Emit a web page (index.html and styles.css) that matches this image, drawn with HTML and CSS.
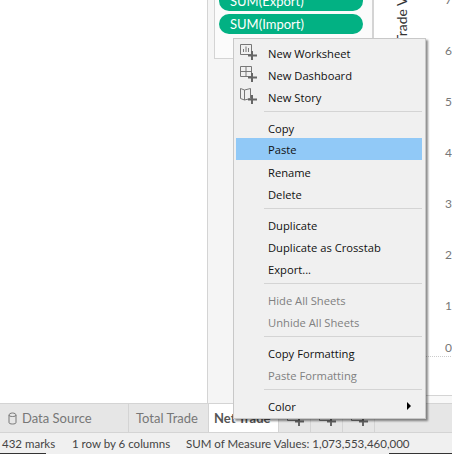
FILE: index.html
```html
<!DOCTYPE html>
<html lang="en">
<head>
    <meta charset="UTF-8">
    <meta name="viewport" content="width=device-width, initial-scale=1.0">
    <title>Net Trade</title>
    <link rel="stylesheet" href="styles.css">
</head>
<body>
    <div class="workspace">
        <div class="side-pane"></div>
        <div class="shelf-pane">
            <div class="marks-card">
                <div class="pill">SUM(Export)</div>
                <div class="pill">SUM(Import)</div>
            </div>
        </div>
        <div class="plot">
            <div class="plot-main">
                <div class="axis-title"><span>Trade Value</span></div>
                <div class="axis">
                    <div class="tick">7</div>
                    <div class="tick">6</div>
                    <div class="tick">5</div>
                    <div class="tick">4</div>
                    <div class="tick">3</div>
                    <div class="tick">2</div>
                    <div class="tick tick-short">1</div>
                    <div class="tick">0</div>
                    <div class="axis-baseline"></div>
                </div>
            </div>
            <div class="plot-scroll"></div>
        </div>
    </div>

    <div class="tab-strip">
        <div class="tab tab-source">
            <svg class="db-icon" width="9" height="13" viewBox="0 0 9 13"><path d="M1 3v7.5c0 1 1.5 1.5 3.5 1.5s3.500-.5 3.500-1.500V3M1 3c0-1 1.500-2 3.500-2S8 2 8 3 6.500 4.500 4.500 4.500 1 4 1 3z" fill="none" stroke="#777"/></svg>
            Data Source
        </div>
        <div class="tab tab-sheet">Total Trade</div>
        <div class="tab tab-active">Net Trade</div>
        <div class="tab tab-add">
            <svg width="18" height="18" viewBox="0 0 18 18"><path d="M.5.500h11v10H.5z" fill="none" stroke="#777"/><path d="M12 7v9M8 11.500h9" stroke="#666" stroke-width="2"/></svg>
        </div>
        <div class="tab tab-add">
            <svg width="18" height="18" viewBox="0 0 18 18"><path d="M.5.500h11v10H.5z" fill="none" stroke="#777"/><path d="M12 7v9M8 11.500h9" stroke="#666" stroke-width="2"/></svg>
        </div>
        <div class="tab tab-add">
            <svg width="18" height="18" viewBox="0 0 18 18"><path d="M.5.500h11v10H.5z" fill="none" stroke="#777"/><path d="M12 7v9M8 11.500h9" stroke="#666" stroke-width="2"/></svg>
        </div>
    </div>

    <div class="status-bar">
        <span class="status-marks">432 marks</span>
        <span class="status-size">1 row by 6 columns</span>
        <span>SUM of Measure Values: 1,073,553,460,000</span>
        <div class="status-progress status-progress-left"></div>
        <div class="status-progress status-progress-right"></div>
    </div>

    <div class="context-menu">
        <div class="menu-item">
            <svg class="menu-icon" width="18" height="18" viewBox="0 0 18 18">
                <path d="M.5.500h11v10H.5z" fill="none" stroke="#777"/>
                <path d="M3.500 8V5M6 8V2.500M8.500 8V4" stroke="#777"/>
                <path d="M12 7v9M8 11.500h9" stroke="#666" stroke-width="2"/>
            </svg>
            New Worksheet
        </div>
        <div class="menu-item">
            <svg class="menu-icon" width="18" height="18" viewBox="0 0 18 18">
                <path d="M.5.500h11v10H.5zM.5 5.500h11M6 .5v10" fill="none" stroke="#777"/>
                <path d="M12 7v9M8 11.500h9" stroke="#666" stroke-width="2"/>
            </svg>
            New Dashboard
        </div>
        <div class="menu-item">
            <svg class="menu-icon" width="18" height="18" viewBox="0 0 18 18">
                <path d="M.5.500l4 1.500 6-1.500v10l-6 1.500-4-1.500zM4.500 2v10" fill="none" stroke="#777"/>
                <path d="M12 7v9M8 11.500h9" stroke="#666" stroke-width="2"/>
            </svg>
            New Story
        </div>
        <div class="menu-sep"></div>
        <div class="menu-item">Copy</div>
        <div class="menu-item menu-item-hover">Paste</div>
        <div class="menu-item">Rename</div>
        <div class="menu-item">Delete</div>
        <div class="menu-sep"></div>
        <div class="menu-item">Duplicate</div>
        <div class="menu-item">Duplicate as Crosstab</div>
        <div class="menu-item">Export...</div>
        <div class="menu-sep"></div>
        <div class="menu-item menu-item-off">Hide All Sheets</div>
        <div class="menu-item menu-item-off">Unhide All Sheets</div>
        <div class="menu-sep"></div>
        <div class="menu-item">Copy Formatting</div>
        <div class="menu-item menu-item-off">Paste Formatting</div>
        <div class="menu-sep"></div>
        <div class="menu-item menu-item-sub">Color<span class="menu-arrow"></span></div>
    </div>
</body>
</html>
```

FILE: styles.css
```css
body {
    margin: 0;
    width: 452px;
    height: 454px;
    position: relative;
    overflow: hidden;
    display: flex;
    flex-direction: column;
    background: white;
    font-family: 'Lato', sans-serif;
    font-size: 13px;
}
.workspace {
    height: 403px;
    display: flex;
    flex: none;
}
.side-pane {
    width: 207px;
    flex: none;
    border-right: 1px solid #d4d4d4;
}
.shelf-pane {
    width: 166px;
    flex: none;
    padding-left: 6px;
    box-sizing: border-box;
    border-right: 1px solid #d4d4d4;
    background: #f5f5f5;
}
.marks-card {
    width: 153px;
    height: 68px;
    margin-top: -11px;
    box-sizing: content-box;
    padding: 0 0 0 4px;
    display: flex;
    flex-direction: column;
    justify-content: flex-end;
    gap: 3px;
    padding-bottom: 0;
    border: 1px solid #d4d4d4;
    background: #fbfbfb;
}
.pill {
    width: 144px;
    height: 20px;
    line-height: 20px;
    box-sizing: border-box;
    padding-left: 11px;
    border-radius: 10px;
    background: #02b183;
    color: white;
    position: relative;
    top: -24px;
}
.plot {
    flex: 1;
    min-width: 0;
    display: flex;
    flex-direction: column;
}
.plot-main {
    flex: 1;
    display: flex;
    align-items: flex-start;
}
.plot-scroll {
    height: 8px;
    box-sizing: border-box;
    border-top: 1px solid #d4d4d4;
    background: #f8f8f8;
}
.axis-title {
    width: 18px;
    height: 43px;
    margin-left: 18px;
    display: flex;
    flex: none;
    align-items: center;
    writing-mode: vertical-rl;
    transform: rotate(180deg);
    white-space: nowrap;
    font-size: 14px;
    color: #333;
}
.axis {
    margin-left: 35px;
    margin-top: -7px;
    position: relative;
    color: #777;
    font-size: 12px;
    flex: none;
}
.tick {
    height: 51px;
    line-height: 14px;
}
.tick-short {
    height: 42px;
}
.axis-baseline {
    position: absolute;
    left: -20px;
    top: 363px;
    width: 30px;
    border-top: 1px dotted #ccc;
}
.tab-strip {
    height: 30px;
    flex: none;
    display: flex;
    box-sizing: border-box;
    border-top: 1px solid #d4d4d4;
    border-bottom: 1px solid #d4d4d4;
    background: #e6e6e6;
    color: #777;
}
.tab {
    flex: none;
    box-sizing: border-box;
    display: flex;
    align-items: center;
    border-right: 1px solid #d4d4d4;
}
.tab-source {
    width: 129px;
    padding-left: 8px;
    gap: 5px;
}
.tab-sheet {
    width: 80px;
    padding-left: 7px;
}
.tab-active {
    width: 70px;
    padding-left: 5px;
    background: white;
    color: #555;
    font-weight: bold;
}
.tab-add {
    width: 32px;
    padding: 2px 0 0 8px;
}
.status-bar {
    flex: 1;
    position: relative;
    display: flex;
    align-items: center;
    padding-left: 2px;
    background: #f0f0f0;
    color: #444;
    font-size: 11.5px;
}
.status-marks {
    width: 70px;
}
.status-size {
    width: 114px;
}
.status-progress {
    position: absolute;
    bottom: 0;
    height: 1px;
    background: #333;
}
.status-progress-left {
    left: 0;
    width: 46px;
}
.status-progress-right {
    right: 0;
    width: 63px;
}
.context-menu {
    position: absolute;
    left: 233px;
    top: 38px;
    width: 193px;
    box-sizing: border-box;
    padding: 3px 3px 1px 2px;
    border: 1px solid #c8c8c8;
    background: #f0f0f0;
    box-shadow: 2px 2px 2px rgba(0, 0, 0, 0.45);
    font-family: 'Open Sans', sans-serif;
    font-size: 11.2px;
    color: #111;
}
.menu-item {
    height: 22px;
    line-height: 23px;
    padding-left: 32px;
    position: relative;
}
.menu-item-hover {
    margin: -1px 0 1px;
    background: #91c9f7;
}
.menu-item-off {
    color: #808080;
}
.menu-icon {
    position: absolute;
    left: 4px;
    top: 2px;
}
.menu-sep {
    height: 1px;
    margin: 3px 0 5px 28px;
    background: #d4d4d4;
}
.menu-arrow {
    position: absolute;
    left: 171px;
    top: 7px;
    border-left: 4px solid black;
    border-top: 4px solid transparent;
    border-bottom: 4px solid transparent;
}
```
